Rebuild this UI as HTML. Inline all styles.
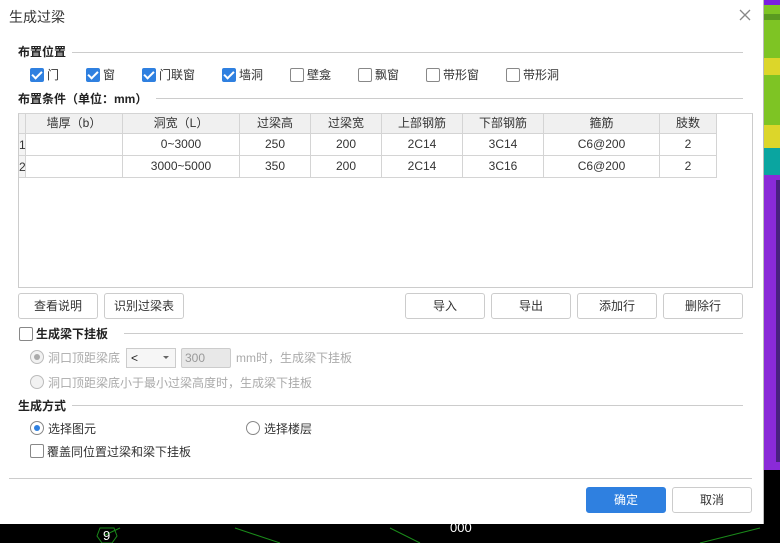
<!DOCTYPE html>
<html><head><meta charset="utf-8"><style>
*{margin:0;padding:0;box-sizing:border-box}
body{width:780px;height:543px;overflow:hidden;background:#000;position:relative;font-family:"Liberation Sans","Noto Sans CJK SC",sans-serif;font-size:12px;color:#333}
.a{position:absolute}
#dlg{left:0;top:0;width:764px;height:524px;background:#fff;border-right:1px solid #bbb}
.sec{font-weight:bold;color:#222;font-size:12px;line-height:14px}
.ln{height:1px;background:#ccc}
.cb{width:14px;height:14px;border:1px solid #888;border-radius:2px;background:#fff}
.cb.on{background:#2f80e0;border-color:#2f80e0}
.cb.on::after{content:"";position:absolute;left:3px;top:0px;width:4px;height:8px;border:solid #fff;border-width:0 2px 2px 0;transform:rotate(45deg)}
.lb{line-height:14px}
.btn{height:26px;border:1px solid #ccc;border-radius:3px;background:#fff;text-align:center;line-height:24px;color:#333}
.rd{width:14px;height:14px;border:1px solid #888;border-radius:50%;background:#fff}
.cell{position:absolute;border-right:1px solid #d4d4d4;border-bottom:1px solid #d4d4d4;text-align:center;line-height:21px}
.hd{background:#f0f0f0;line-height:19px}
.gray{color:#aaa}
</style></head><body>
<!-- background strip -->
<div class="a" style="left:764px;top:0;width:16px;height:5px;background:#7a1ee0"></div>
<div class="a" style="left:764px;top:5px;width:16px;height:53px;background:#7ec424"></div>
<div class="a" style="left:764px;top:14px;width:16px;height:6px;background:#5a9a20"></div>
<div class="a" style="left:764px;top:58px;width:16px;height:17px;background:#dcd62a"></div>
<div class="a" style="left:764px;top:75px;width:16px;height:50px;background:#7ec424"></div>
<div class="a" style="left:764px;top:125px;width:16px;height:23px;background:#dcd62a"></div>
<div class="a" style="left:764px;top:148px;width:16px;height:27px;background:#0aa5a0"></div>
<div class="a" style="left:764px;top:175px;width:16px;height:295px;background:#8a2ad8"></div>
<div class="a" style="left:776px;top:180px;width:4px;height:282px;background:#4a2080"></div>
<div class="a" style="left:764px;top:470px;width:16px;height:73px;background:#000"></div>

<div id="dlg" class="a">
<div class="a" style="left:9px;top:7px;font-size:14px;color:#333">生成过梁</div>
<svg class="a" style="left:739px;top:9px" width="12" height="12"><path d="M1 1L11 11M11 1L1 11" stroke="#888" stroke-width="1.3"/></svg>

<div class="a sec" style="left:18px;top:45px">布置位置</div>
<div class="a ln" style="left:72px;top:52px;width:671px"></div>

<div class="a cb on" style="left:30px;top:68px"></div><div class="a lb" style="left:47px;top:68px">门</div>
<div class="a cb on" style="left:86px;top:68px"></div><div class="a lb" style="left:103px;top:68px">窗</div>
<div class="a cb on" style="left:142px;top:68px"></div><div class="a lb" style="left:159px;top:68px">门联窗</div>
<div class="a cb on" style="left:222px;top:68px"></div><div class="a lb" style="left:239px;top:68px">墙洞</div>
<div class="a cb" style="left:290px;top:68px"></div><div class="a lb" style="left:307px;top:68px">壁龛</div>
<div class="a cb" style="left:358px;top:68px"></div><div class="a lb" style="left:375px;top:68px">飘窗</div>
<div class="a cb" style="left:426px;top:68px"></div><div class="a lb" style="left:443px;top:68px">带形窗</div>
<div class="a cb" style="left:506px;top:68px"></div><div class="a lb" style="left:523px;top:68px">带形洞</div>

<div class="a sec" style="left:18px;top:92px">布置条件（单位：mm）</div>
<div class="a ln" style="left:156px;top:98px;width:587px"></div>

<div class="a" style="left:18px;top:113px;width:735px;height:175px;border:1px solid #ccc;border-top-color:#d4d4d4"></div>
<div class="cell hd" style="left:19px;top:114px;width:7px;height:20px"></div>
<div class="cell hd" style="left:26px;top:114px;width:97px;height:20px">墙厚（b）</div>
<div class="cell hd" style="left:123px;top:114px;width:117px;height:20px">洞宽（L）</div>
<div class="cell hd" style="left:240px;top:114px;width:71px;height:20px">过梁高</div>
<div class="cell hd" style="left:311px;top:114px;width:71px;height:20px">过梁宽</div>
<div class="cell hd" style="left:382px;top:114px;width:81px;height:20px">上部钢筋</div>
<div class="cell hd" style="left:463px;top:114px;width:81px;height:20px">下部钢筋</div>
<div class="cell hd" style="left:544px;top:114px;width:116px;height:20px">箍筋</div>
<div class="cell hd" style="left:660px;top:114px;width:57px;height:20px">肢数</div>

<div class="cell hd" style="left:19px;top:134px;width:7px;height:22px;text-align:left;line-height:22px;background:#f4f4f4">1</div>
<div class="cell" style="left:26px;top:134px;width:97px;height:22px"></div>
<div class="cell" style="left:123px;top:134px;width:117px;height:22px">0~3000</div>
<div class="cell" style="left:240px;top:134px;width:71px;height:22px">250</div>
<div class="cell" style="left:311px;top:134px;width:71px;height:22px">200</div>
<div class="cell" style="left:382px;top:134px;width:81px;height:22px">2C14</div>
<div class="cell" style="left:463px;top:134px;width:81px;height:22px">3C14</div>
<div class="cell" style="left:544px;top:134px;width:116px;height:22px">C6@200</div>
<div class="cell" style="left:660px;top:134px;width:57px;height:22px">2</div>

<div class="cell hd" style="left:19px;top:156px;width:7px;height:22px;text-align:left;line-height:22px;background:#f4f4f4">2</div>
<div class="cell" style="left:26px;top:156px;width:97px;height:22px"></div>
<div class="cell" style="left:123px;top:156px;width:117px;height:22px">3000~5000</div>
<div class="cell" style="left:240px;top:156px;width:71px;height:22px">350</div>
<div class="cell" style="left:311px;top:156px;width:71px;height:22px">200</div>
<div class="cell" style="left:382px;top:156px;width:81px;height:22px">2C14</div>
<div class="cell" style="left:463px;top:156px;width:81px;height:22px">3C16</div>
<div class="cell" style="left:544px;top:156px;width:116px;height:22px">C6@200</div>
<div class="cell" style="left:660px;top:156px;width:57px;height:22px">2</div>

<div class="a btn" style="left:18px;top:293px;width:80px">查看说明</div>
<div class="a btn" style="left:104px;top:293px;width:80px">识别过梁表</div>
<div class="a btn" style="left:405px;top:293px;width:80px">导入</div>
<div class="a btn" style="left:491px;top:293px;width:80px">导出</div>
<div class="a btn" style="left:577px;top:293px;width:80px">添加行</div>
<div class="a btn" style="left:663px;top:293px;width:80px">删除行</div>

<div class="a cb" style="left:19px;top:327px"></div>
<div class="a sec" style="left:36px;top:327px">生成梁下挂板</div>
<div class="a ln" style="left:124px;top:333px;width:619px"></div>

<div class="a rd" style="left:30px;top:350px;background:#f2f2f2;border-color:#bbb"></div>
<div class="a" style="left:34px;top:354px;width:6px;height:6px;border-radius:50%;background:#aaa"></div>
<div class="a lb gray" style="left:48px;top:351px">洞口顶距梁底</div>
<div class="a" style="left:126px;top:348px;width:50px;height:20px;border:1px solid #ccc;background:#f6f6f6;line-height:18px;padding-left:4px;color:#222">&lt;</div>
<div class="a" style="left:163px;top:356px;width:0;height:0;border-left:3px solid transparent;border-right:3px solid transparent;border-top:3px solid #666"></div>
<div class="a" style="left:181px;top:348px;width:50px;height:20px;border:1px solid #ccc;border-radius:2px;background:#e8e8e8;line-height:18px;padding-left:3px;color:#999">300</div>
<div class="a lb gray" style="left:236px;top:351px">mm时，生成梁下挂板</div>

<div class="a rd" style="left:30px;top:375px;background:#f2f2f2;border-color:#bbb"></div>
<div class="a lb gray" style="left:48px;top:376px">洞口顶距梁底小于最小过梁高度时，生成梁下挂板</div>

<div class="a sec" style="left:18px;top:399px">生成方式</div>
<div class="a ln" style="left:72px;top:405px;width:671px"></div>

<div class="a rd" style="left:30px;top:421px"></div>
<div class="a" style="left:34px;top:425px;width:6px;height:6px;border-radius:50%;background:#2f80e0"></div>
<div class="a lb" style="left:48px;top:422px">选择图元</div>
<div class="a rd" style="left:246px;top:421px"></div>
<div class="a lb" style="left:264px;top:422px">选择楼层</div>

<div class="a cb" style="left:30px;top:444px"></div>
<div class="a lb" style="left:47px;top:445px">覆盖同位置过梁和梁下挂板</div>

<div class="a ln" style="left:9px;top:478px;width:743px"></div>
<div class="a btn" style="left:586px;top:487px;width:80px;background:#2f80e0;border-color:#2f80e0;color:#fff">确定</div>
<div class="a btn" style="left:672px;top:487px;width:80px">取消</div>
</div>

<svg class="a" style="left:0;top:524px" width="780" height="19">
<path d="M120 4L105 11" stroke="#1a8a1a" fill="none"/>
<polygon points="100,4 114,4 117,12 112,19 102,19 97,12" stroke="#1a8a1a" fill="none"/>
<text x="103" y="16" fill="#fff" font-size="13" font-family="Liberation Sans">9</text>
<text x="450" y="8" fill="#fff" font-size="13" font-family="Liberation Sans">000</text>
<path d="M235 4L280 19M390 4L420 19M760 4L700 19" stroke="#1a8a1a"/>
</svg>
</body></html>
